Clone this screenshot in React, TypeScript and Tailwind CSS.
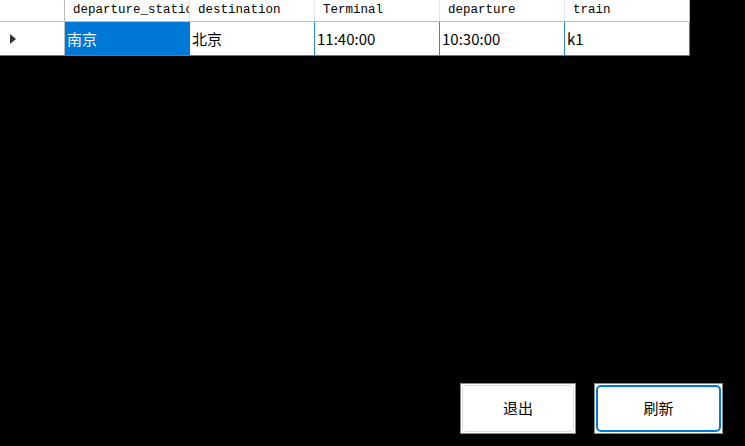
import React from "react";

const headers = ["departure_station", "destination", "Terminal", "departure", "train"];
const row = ["南京", "北京", "11:40:00", "10:30:00", "k1"];

export default function App() {
  return (
    <div className="w-[745px] h-[446px] bg-black flex flex-col overflow-hidden">
      <div className="w-[690px] flex flex-col">
        <div className="flex h-[22px] bg-white border-b border-[#bdbdbd]">
          <div className="w-[65px] shrink-0 border-r border-[#bdbdbd]" />
          {headers.map((h, i) => (
            <div
              key={h}
              className={`w-[125px] shrink-0 pl-[8px] flex items-center overflow-hidden whitespace-nowrap text-[12.5px] text-black leading-none ${i < headers.length - 1 ? "border-r border-[#e3e3e3]" : "border-r border-[#bdbdbd]"}`}
              style={{ fontFamily: '"Liberation Mono", monospace' }}
            >
              {h}
            </div>
          ))}
        </div>
        <div className="flex h-[34px] bg-white border-b border-[#2b88d8]">
          <div className="w-[65px] shrink-0 border-r border-[#bdbdbd] flex items-center pl-[10px]">
            <svg width="7" height="10" viewBox="0 0 7 10">
              <polygon points="0,0 6,5 0,10" fill="#333" />
            </svg>
          </div>
          {row.map((c, i) => (
            <div
              key={i}
              className={`w-[125px] shrink-0 pl-[2px] flex items-center overflow-hidden whitespace-nowrap text-[15px] leading-none border-r border-[#2b88d8] ${i === 0 ? "bg-[#0078d7] text-white border-r-[#0078d7]" : "text-black"}`}
              style={{ fontFamily: '"Noto Sans CJK SC", "Noto Sans", sans-serif' }}
            >
              {c}
            </div>
          ))}
        </div>
      </div>
      <div className="flex-1" />
      <div className="flex justify-end gap-[18px] pr-[22px] pb-[12px]">
        <div className="w-[116px] h-[51px] border border-[#8a8a8a] bg-white p-[1px]">
          <div
            className="w-full h-full rounded-[4px] border border-[#dcdcdc] flex items-center justify-center text-[15px] text-black"
            style={{ fontFamily: '"Noto Sans CJK SC", sans-serif' }}
          >
            退出
          </div>
        </div>
        <div className="w-[129px] h-[51px] border border-[#8a8a8a] bg-white p-[1px]">
          <div
            className="w-full h-full rounded-[5px] border-2 border-[#0078d7] flex items-center justify-center text-[15px] text-black"
            style={{ fontFamily: '"Noto Sans CJK SC", sans-serif' }}
          >
            刷新
          </div>
        </div>
      </div>
    </div>
  );
}
